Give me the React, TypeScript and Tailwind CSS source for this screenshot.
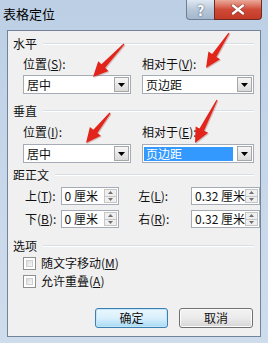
import React from "react";

type Pt = [number, number];

function arrowPoints(t: Pt, p: Pt) {
  const dx = p[0] - t[0];
  const dy = p[1] - t[1];
  const len = Math.sqrt(dx * dx + dy * dy);
  const d: Pt = [dx / len, dy / len];
  const n: Pt = [-d[1], d[0]];
  const headLen = 15;
  const b: Pt = [p[0] - d[0] * headLen, p[1] - d[1] * headLen];
  const pts: Pt[] = [
    [t[0] + n[0] * 0.6, t[1] + n[1] * 0.6],
    [b[0] + n[0] * 2.6, b[1] + n[1] * 2.6],
    [b[0] + n[0] * 7, b[1] + n[1] * 7],
    p,
    [b[0] - n[0] * 7, b[1] - n[1] * 7],
    [b[0] - n[0] * 2.6, b[1] - n[1] * 2.6],
    [t[0] - n[0] * 0.6, t[1] - n[1] * 0.6],
  ];
  return pts.map((q) => `${q[0].toFixed(1)},${q[1].toFixed(1)}`).join(" ");
}

function Arrows() {
  const arrows: [Pt, Pt][] = [
    [[124, 44], [93, 77]],
    [[229, 33], [206, 68]],
    [[110, 113], [86, 143]],
    [[217, 100], [195, 143]],
  ];
  return (
    <svg
      className="absolute left-0 top-0 pointer-events-none"
      width={268}
      height={343}
      viewBox="0 0 268 343"
    >
      {arrows.map(([t, p], i) => (
        <g key={i}>
          <polygon points={arrowPoints([t[0] + 1, t[1] + 1], [p[0] + 1, p[1] + 1])} fill="#7a1a14" opacity={0.25} />
          <polygon points={arrowPoints(t, p)} fill="#e3241b" />
        </g>
      ))}
    </svg>
  );
}

function DownTri() {
  return (
    <svg width="7" height="4" viewBox="0 0 7 4">
      <polygon points="0,0 7,0 3.5,4" fill="#000" />
    </svg>
  );
}

function Combo({ value, selected }: { value: string; selected?: boolean }) {
  return (
    <div className="h-[19px] bg-white border border-[#a5acb5] flex items-center pr-[1px]">
      <div className="flex-1 h-full flex items-center">
        {selected ? (
          <div className="ml-[1px] mr-[4px] h-[14px] flex-1 bg-[#3399ff] text-white pl-[2px] flex items-center leading-none">
            {value}
          </div>
        ) : (
          <span className="pl-[3px] leading-none">{value}</span>
        )}
      </div>
      <div className="w-[15px] h-[15px] border border-[#a6a6a6] bg-gradient-to-b from-[#f6f6f6] to-[#dadada] flex items-center justify-center">
        <DownTri />
      </div>
    </div>
  );
}

function Spin({ value }: { value: string }) {
  return (
    <div className="h-[18px] bg-white border border-[#a5acb5] flex items-stretch">
      <span className="flex-1 min-w-0 pl-[3px] flex items-center leading-none whitespace-nowrap overflow-hidden">{value}</span>
      <div className="w-[13px] shrink-0 flex flex-col my-[1px] mr-[1px]">
        <div className="flex-1 border border-[#c6c6c6] bg-[#efefef] flex items-center justify-center">
          <svg width="5" height="3" viewBox="0 0 5 3">
            <polygon points="0,3 5,3 2.5,0" fill="#6f6f6f" />
          </svg>
        </div>
        <div className="flex-1 border border-t-0 border-[#c6c6c6] bg-[#efefef] flex items-center justify-center">
          <svg width="5" height="3" viewBox="0 0 5 3">
            <polygon points="0,0 5,0 2.5,3" fill="#6f6f6f" />
          </svg>
        </div>
      </div>
    </div>
  );
}

function Header({ text }: { text: string }) {
  return (
    <div className="h-[16px] flex items-center pl-[5px] pr-[6px]">
      <span className="leading-none">{text}</span>
      <div className="flex-1 ml-[6px] h-[2px] border-t border-[#d5dfe5] border-b border-b-white" />
    </div>
  );
}

function U({ c }: { c: string }) {
  return <span className="underline underline-offset-[1px]">{c}</span>;
}

function CheckRow({ label, k }: { label: string; k: string }) {
  return (
    <div className="h-[14px] flex items-center pl-[15px]">
      <div className="w-[13px] h-[13px] border border-[#8e8f8f] bg-white p-[2px]">
        <div className="w-full h-full bg-gradient-to-br from-[#dcdcdc] to-[#f8f8f8] border border-[#cfcfcf]" />
      </div>
      <span className="ml-[5px] leading-none">
        {label}(<U c={k} />)
      </span>
    </div>
  );
}

export default function App() {
  return (
    <div className="relative w-[268px] h-[343px] overflow-hidden bg-gradient-to-b from-[#bccfe4] via-[#c7d7ea] to-[#cfdcec] font-['Noto_Sans_CJK_SC','Noto_Sans',sans-serif] text-[12px] text-[#111]">
      {/* Title bar */}
      <div className="h-[30px] flex items-start">
        <div className="pl-[3px] pt-[7px] text-[13px] leading-none text-black">表格定位</div>
        <div className="flex-1" />
        <div className="flex mr-[6px]">
          <div className="w-[28px] h-[20px] rounded-bl-[4px] border border-[#6c7f96] border-t-0 border-r-0 bg-gradient-to-b from-[#dfe8f2] via-[#b9c8d9] to-[#a3b6cc] flex items-center justify-center text-white font-bold text-[14px] leading-none [text-shadow:0_0_2px_#33475f]">
            ?
          </div>
          <div className="w-[48px] h-[20px] rounded-br-[4px] border border-[#6e2a22] border-t-0 bg-gradient-to-b from-[#e9a99a] via-[#cf4a37] to-[#c23a26] flex items-center justify-center">
            <svg width="14" height="11" viewBox="0 0 14 11">
              <path d="M2 1.5 L12 9.5 M12 1.5 L2 9.5" stroke="#5a1a12" strokeWidth="3.6" strokeLinecap="round" opacity="0.5" />
              <path d="M2 1.5 L12 9.5 M12 1.5 L2 9.5" stroke="#fff" strokeWidth="2.4" strokeLinecap="round" />
            </svg>
          </div>
        </div>
      </div>

      {/* Client area */}
      <div className="mx-[7px] h-[307px] border border-[#71849b] bg-[#f0f0f0] flex flex-col pt-[5px]">
        <Header text="水平" />
        <div className="flex pl-[15px] gap-[11px] mt-[4px]">
          <div className="w-[108px] flex flex-col">
            <div className="h-[16px] flex items-center leading-none">
              位置(<U c="S" />):
            </div>
            <div className="mt-[3px]">
              <Combo value="居中" />
            </div>
          </div>
          <div className="w-[112px] flex flex-col">
            <div className="h-[16px] flex items-center leading-none">
              相对于(<U c="V" />):
            </div>
            <div className="mt-[3px]">
              <Combo value="页边距" />
            </div>
          </div>
        </div>

        <div className="mt-[9px]">
          <Header text="垂直" />
        </div>
        <div className="flex pl-[15px] gap-[11px] mt-[5px]">
          <div className="w-[108px] flex flex-col">
            <div className="h-[16px] flex items-center leading-none">
              位置(<U c="I" />):
            </div>
            <div className="mt-[4px]">
              <Combo value="居中" />
            </div>
          </div>
          <div className="w-[112px] flex flex-col">
            <div className="h-[16px] flex items-center leading-none">
              相对于(<U c="E" />):
            </div>
            <div className="mt-[4px]">
              <Combo value="页边距" selected />
            </div>
          </div>
        </div>

        <div className="mt-[4px]">
          <Header text="距正文" />
        </div>
        <div className="flex flex-col mt-[4px] gap-[5px]">
          <div className="flex items-center">
            <div className="w-[54px] pl-[17px] leading-none whitespace-nowrap">
              上(<U c="T" />):
            </div>
            <div className="w-[61px]">
              <Spin value="0 厘米" />
            </div>
            <div className="w-[74px] pl-[19px] leading-none whitespace-nowrap">
              左(<U c="L" />):
            </div>
            <div className="w-[70px]">
              <Spin value="0.32 厘米" />
            </div>
          </div>
          <div className="flex items-center">
            <div className="w-[54px] pl-[17px] leading-none whitespace-nowrap">
              下(<U c="B" />):
            </div>
            <div className="w-[61px]">
              <Spin value="0 厘米" />
            </div>
            <div className="w-[74px] pl-[19px] leading-none whitespace-nowrap">
              右(<U c="R" />):
            </div>
            <div className="w-[70px]">
              <Spin value="0.32 厘米" />
            </div>
          </div>
        </div>

        <div className="mt-[10px]">
          <Header text="选项" />
        </div>
        <div className="mt-[2px]">
          <CheckRow label="随文字移动" k="M" />
        </div>
        <div className="mt-[4px]">
          <CheckRow label="允许重叠" k="A" />
        </div>

        <div className="mt-[20px] flex justify-end gap-[11px] pr-[7px]">
          <div className="w-[73px] h-[20px] rounded-[3px] border border-[#3c7fb1] bg-gradient-to-b from-[#eaf6fd] via-[#d9f0fc] to-[#a7d9f5] shadow-[inset_0_0_0_1px_#c4e5f6] flex items-center justify-center leading-none">
            确定
          </div>
          <div className="w-[74px] h-[20px] rounded-[3px] border border-[#707070] bg-gradient-to-b from-[#f2f2f2] via-[#ebebeb] to-[#d5d5d5] shadow-[inset_0_0_0_1px_#fcfcfc] flex items-center justify-center leading-none">
            取消
          </div>
        </div>
      </div>

      <Arrows />
    </div>
  );
}
